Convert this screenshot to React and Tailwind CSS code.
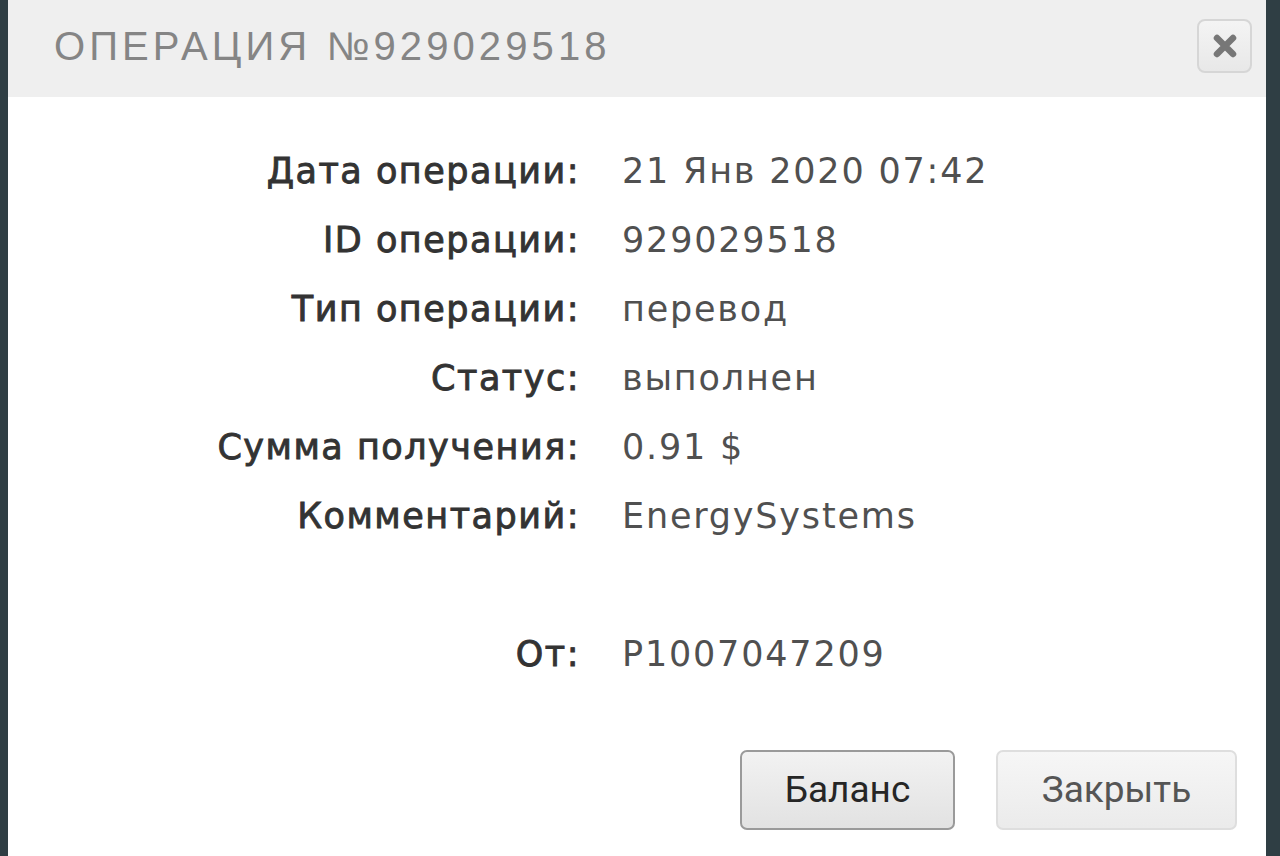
import React from "react";

const rows = [
  { label: "Дата операции:", value: "21 Янв 2020 07:42" },
  { label: "ID операции:", value: "929029518" },
  { label: "Тип операции:", value: "перевод" },
  { label: "Статус:", value: "выполнен" },
  { label: "Сумма получения:", value: "0.91 $" },
  { label: "Комментарий:", value: "EnergySystems" },
  { label: "", value: "" },
  { label: "От:", value: "P1007047209" },
];

const Row = ({ label, value }) => (
  <div className="flex items-center h-[69px] font-['DejaVu_Sans',sans-serif]">
    <div className="w-[572px] text-right font-normal text-[#333] text-[35px] tracking-[1.5px] [-webkit-text-stroke:0.9px_#333333]">
      {label}
    </div>
    <div className="pl-[42px] text-[#505050] text-[35px] font-normal tracking-[1.8px]">{value}</div>
  </div>
);

const App = () => {
  return (
    <div className="w-full h-[856px] bg-[#2f3e44] flex pl-[8px] pr-[14px] overflow-hidden">
      <div className="flex-1 bg-white flex flex-col">
        {/* HEADER */}
        <div className="h-[97px] bg-[#efefef] flex items-center justify-between pl-[46px] pr-[14px] pb-[5px] shrink-0">
          <p className="text-[40px] leading-none tracking-[4.1px] text-[#858585] font-['Liberation_Sans',sans-serif]">
            ОПЕРАЦИЯ №929029518
          </p>
          <button className="w-[55px] h-[54px] rounded-[8px] border-2 border-[#d6d6d6] bg-gradient-to-b from-[#f4f4f4] to-[#e8e8e8] flex items-center justify-center">
            <svg width="26" height="26" viewBox="0 0 26 26">
              <path d="M5 5 L21 21 M21 5 L5 21" stroke="#777" strokeWidth="6.5" strokeLinecap="round" />
            </svg>
          </button>
        </div>

        {/* DETAILS */}
        <div className="pt-[40px]">
          {rows.map((r, i) => (
            <Row key={i} label={r.label} value={r.value} />
          ))}
        </div>

        {/* BUTTONS */}
        <div className="flex justify-end gap-[41px] pr-[29px] mt-auto mb-[26px] font-['Roboto',sans-serif]">
          <button className="w-[215px] h-[80px] rounded-[7px] border-2 border-[#9a9a9a] bg-gradient-to-b from-[#f2f2f2] to-[#e2e2e2] text-[#262626] text-[37px]">
            Баланс
          </button>
          <button className="w-[241px] h-[80px] rounded-[7px] border-2 border-[#dedede] bg-gradient-to-b from-[#f6f6f6] to-[#ebebeb] text-[#555] text-[37px]">
            Закрыть
          </button>
        </div>
      </div>
    </div>
  );
};

export default App;
